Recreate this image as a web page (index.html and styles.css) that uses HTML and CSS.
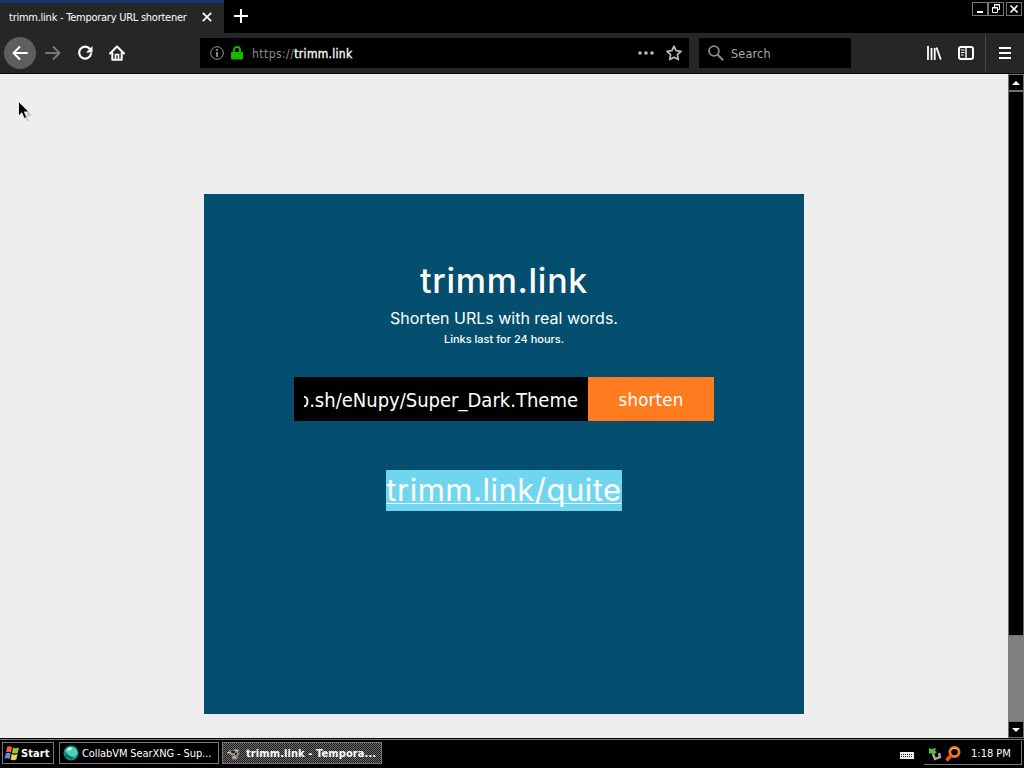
FILE: index.html
```html
<!DOCTYPE html>
<html lang="en">
<head>
    <meta charset="UTF-8">
    <meta name="viewport" content="width=device-width, initial-scale=1.0">
    <title>trimm.link - Temporary URL shortener</title>
    <link rel="stylesheet" href="styles.css">
</head>
<body>
    <div class="tabbar">
        <div class="tab">
            <span class="tab-title">trimm.link - Temporary URL shortener</span>
            <svg class="tab-close" width="10" height="10" viewBox="0 0 10 10"><path d="M.8.8l8.4 8.4M9.2.8L.8 9.2" stroke="#fff" stroke-width="1.7"/></svg>
        </div>
        <svg class="new-tab" width="14" height="14" viewBox="0 0 14 14"><path d="M7 0v14M0 7h14" stroke="#fff" stroke-width="2"/></svg>
        <div class="window-buttons">
            <span class="win-btn"><svg width="14" height="12" viewBox="0 0 14 12"><path d="M4 9h6" stroke="#fff" stroke-width="2"/></svg></span>
            <span class="win-btn"><svg width="14" height="12" viewBox="0 0 14 12"><path d="M5.500 4V1.500h5v5H9M5 2h6M3.500 4.500h5v5h-5zM3 5h6" fill="none" stroke="#fff"/></svg></span>
            <span class="win-btn close"><svg width="14" height="12" viewBox="0 0 14 12"><path d="M3.500 2.500l7 7M10.500 2.500l-7 7" stroke="#fff" stroke-width="1.700"/></svg></span>
        </div>
    </div>

    <div class="toolbar">
        <div class="nav">
            <span class="back"><svg width="16" height="16" viewBox="0 0 16 16"><path d="M15 8H1.500M7.500 2l-6 6 6 6" fill="none" stroke="#fff" stroke-width="2" stroke-linecap="round" stroke-linejoin="round"/></svg></span>
            <svg width="16" height="16" viewBox="0 0 16 16"><path d="M1 8h13.500M8.500 2l6 6-6 6" fill="none" stroke="#777" stroke-width="2" stroke-linecap="round" stroke-linejoin="round"/></svg>
            <svg width="16" height="16" viewBox="0 0 16 16"><path d="M12.800 3.800A6 6 0 1 0 14 9" fill="none" stroke="#fff" stroke-width="2.200" stroke-linecap="round"/><path d="M15.500 1v6.500H9z" fill="#fff"/></svg>
            <svg width="16" height="16" viewBox="0 0 16 16"><path d="M1 8.500l7-7 7 7M3.300 8v6.800h9.400V8" fill="none" stroke="#fff" stroke-width="2" stroke-linecap="round" stroke-linejoin="round"/><path d="M6.500 14.500V9.500h3v5" fill="none" stroke="#fff" stroke-width="1.600"/></svg>
        </div>
        <div class="urlbar">
            <svg width="14" height="14" viewBox="0 0 14 14"><circle cx="7" cy="7" r="6.300" fill="none" stroke="#999"/><path d="M7 6v5M7 3v1.800" stroke="#aaa" stroke-width="1.600"/></svg>
            <svg class="lock" width="12" height="14" viewBox="0 0 12 14"><path d="M3 7V4a3 3 0 0 1 6 0v3" fill="none" stroke="#12bc00" stroke-width="1.900"/><rect y="6" width="12" height="7.500" rx="1" fill="#12bc00"/></svg>
            <span class="address"><span class="scheme">https://</span><span class="domain">trimm.link</span></span>
            <svg class="dots" width="16" height="4" viewBox="0 0 16 4"><g fill="#bbb"><circle cx="2" cy="2" r="1.800"/><circle cx="8" cy="2" r="1.800"/><circle cx="14" cy="2" r="1.800"/></g></svg>
            <svg width="16" height="16" viewBox="0 0 16 16"><path d="M8 1.200l2.100 4.500 4.900.6-3.600 3.400.9 4.900L8 12.200l-4.300 2.400.9-4.900L1 6.300l4.900-.6z" fill="none" stroke="#bbb" stroke-width="1.700" stroke-linejoin="round"/></svg>
        </div>
        <div class="searchbar">
            <svg width="16" height="16" viewBox="0 0 16 16"><circle cx="6" cy="6" r="4.900" fill="none" stroke="#8c8c8c" stroke-width="1.800"/><path d="M9.700 9.700l5.500 5.500" stroke="#8c8c8c" stroke-width="2"/></svg>
            <span>Search</span>
        </div>
        <div class="tools">
            <svg width="16" height="16" viewBox="0 0 16 16"><path d="M2 1v14M5.500 3v12M8.700 3v12M10.500 2.500l4.300 12" stroke="#fff" stroke-width="1.800"/></svg>
            <svg width="16" height="14" viewBox="0 0 16 14"><rect x="1" y="1" width="14" height="12" rx="2" fill="none" stroke="#fff" stroke-width="2"/><path d="M8 1v12" stroke="#fff" stroke-width="1.400"/><path d="M3 4h3.500M3 6.500h3.500M3 9h2.500" stroke="#fff"/></svg>
        </div>
        <div class="menu">
            <svg width="12" height="12" viewBox="0 0 12 12"><path d="M0 1h12M0 6h12M0 11h12" stroke="#fff" stroke-width="2"/></svg>
        </div>
    </div>

    <div class="viewport">
        <div class="page">
            <div class="card">
                <h1>trimm.link</h1>
                <p class="tagline">Shorten URLs with real words.</p>
                <p class="note">Links last for 24 hours.</p>
                <div class="form">
                    <div class="field"><div class="field-clip"><span>p.sh/eNupy/Super_Dark.Theme</span></div></div>
                    <button class="shorten">shorten</button>
                </div>
                <a class="result">trimm.link/quite</a>
            </div>
        </div>
        <div class="scrollbar">
            <div class="scroll-btn"><svg width="8" height="4" viewBox="0 0 8 4"><path d="M4 0l4 4H0z" fill="#fff"/></svg></div>
            <div class="thumb"></div>
            <div class="track"></div>
            <div class="scroll-btn"><svg width="8" height="4" viewBox="0 0 8 4"><path d="M0 0h8L4 4z" fill="#fff"/></svg></div>
        </div>
        <svg class="cursor" width="14" height="21" viewBox="0 0 14 21"><path d="M3 4l9 10-4 1 2 5" fill="none" stroke="#aaa" stroke-width="2" opacity=".6"/><path d="M.5.500v14.500l3.300-3.200 2.400 5.700 2.600-1.100-2.400-5.500h4.700z" fill="#000" stroke="#fff" stroke-width=".8"/></svg>
    </div>

    <div class="taskbar">
        <div class="task start">
            <svg width="16" height="16" viewBox="0 0 16 16"><path d="M3 2q2.500-1.500 5 0L7 7.500q-2.500-1.300-5 0z" fill="#f0643c"/><path d="M9 2.500q2.500 1.300 6 0L13.800 8q-3 1.200-5.800 0z" fill="#8cc63f"/><path d="M1.800 8.500q2.500-1.300 5 0L5.600 14q-2.500-1.400-5 0z" fill="#5a8cf0"/><path d="M7.800 9q3 1.300 5.800 0l-1.300 5.500q-2.800 1.400-5.700 0z" fill="#fbd13c"/></svg>
            <span>Start</span>
        </div>
        <div class="task collab">
            <svg width="16" height="16" viewBox="0 0 16 16"><circle cx="8" cy="8" r="7.500" fill="#148c85"/><path d="M2 6q2-4 6-4l4 1 3 5-3 4-5-1-3-3z" fill="#4fd0bb"/><path d="M4 4l4-2 1 2-4 2z" fill="#d6fff4"/><path d="M2 11l4 1 3 2" stroke="#0b5f5b" stroke-width="1.500" fill="none"/></svg>
            <span>CollabVM SearXNG - Sup...</span>
        </div>
        <div class="task active">
            <svg width="16" height="16" viewBox="0 0 16 16"><path d="M1 8l3-3 2 1 3-2 5 1-2 2 2 2-2 1v3l-3 2-3-1v-3L4 9z" fill="#8c8274"/><path d="M1 8l3-1 2 2M9 5l3 1M8 9h4M7 13l3-1" stroke="#ddd6c8" fill="none"/><path d="M5 7h4M10 8v2" stroke="#29241d" stroke-width="2"/></svg>
            <span>trimm.link - Tempora...</span>
        </div>
        <svg class="keyboard" width="14" height="7" viewBox="0 0 14 7"><rect width="14" height="7" fill="#eee"/><path d="M1 2.500h12M1 4.500h12" stroke="#222" stroke-dasharray="1 1"/></svg>
        <div class="tray">
            <svg width="14" height="14" viewBox="0 0 14 14"><path d="M5 7l2 5 5-2-1-4" fill="none" stroke="#aaa" stroke-width="2.400"/><path d="M1 1l3 1 4-1-1 3 2 1-4 3-2-2-2 1z" fill="#58bb3e"/></svg>
            <svg width="16" height="16" viewBox="0 0 16 16"><circle cx="9.500" cy="6" r="4.600" fill="none" stroke="#f47b20" stroke-width="2.800"/><path d="M6 9.500l-4.500 5" stroke="#e8571c" stroke-width="3.400"/><path d="M6 4q2-3 6-1" fill="none" stroke="#ffc05c"/></svg>
            <span class="clock">1:18 PM</span>
        </div>
    </div>
</body>
</html>
```
FILE: styles.css
```css
body {
    margin: 0;
    width: 1024px;
    height: 768px;
    display: flex;
    flex-direction: column;
    overflow: hidden;
    background: #000;
    color: #fff;
    font-family: "DejaVu Sans Condensed", "DejaVu Sans", sans-serif;
    font-size: 11px;
}

svg {
    display: block;
    flex: none;
}

span {
    white-space: nowrap;
}

/* Browser chrome */
.tabbar {
    height: 33px;
    flex: none;
    display: flex;
    background: #000;
}

.tab {
    box-sizing: border-box;
    width: 224px;
    border-top: 3px solid #17356f;
    background: #262626;
    display: flex;
    align-items: center;
    padding: 0 12px 2px 9px;
    justify-content: space-between;
}

.tab-title {
    font-size: 11px;
    letter-spacing: -0.25px;
}

.new-tab {
    margin: 9px 0 0 10px;
}

.window-buttons {
    display: flex;
    margin: 2px 2px 0 auto;
    height: 14px;
}

.win-btn {
    box-sizing: border-box;
    width: 16px;
    height: 14px;
    border: 1px solid #777;
}

.win-btn.close {
    margin-left: 2px;
}

.toolbar {
    box-sizing: border-box;
    height: 41px;
    flex: none;
    display: flex;
    align-items: center;
    background: #262626;
    border-bottom: 1px solid #0b0b0b;
}

.nav {
    width: 200px;
    display: flex;
    align-items: center;
    gap: 16px;
    padding-left: 4px;
    box-sizing: border-box;
}

.back {
    width: 32px;
    height: 32px;
    margin-right: -7px;
    border-radius: 50%;
    background: #5e5e5e;
    display: flex;
    align-items: center;
    justify-content: center;
}

.urlbar, .searchbar {
    box-sizing: border-box;
    height: 30px;
    background: #000;
    display: flex;
    align-items: center;
    font-size: 13px;
}

.urlbar {
    width: 489px;
    padding: 0 7px 0 10px;
}

.lock {
    margin: 0 9px 0 7px;
}

.address {
    flex: 1;
    font-size: 12px;
    letter-spacing: 0.45px;
    padding-top: 1px;
}

.scheme {
    color: #8a8a8a;
}

.domain {
    letter-spacing: 0.3px;
    -webkit-text-stroke: 0.3px #fff;
}

.dots {
    margin-right: 12px;
}

.searchbar {
    width: 152px;
    margin-left: 10px;
    padding-left: 9px;
    gap: 7px;
    color: #aaa;
    font-size: 12.5px;
    letter-spacing: 0.2px;
}

.tools {
    display: flex;
    align-items: center;
    gap: 16px;
    margin: 0 11px 0 auto;
}

.menu {
    height: 36px;
    width: 39px;
    border-left: 1px solid #4a4a4a;
    box-sizing: border-box;
    padding-left: 13px;
    display: flex;
    align-items: center;
}

/* Page */
.viewport {
    position: relative;
    height: 664px;
    flex: none;
    display: flex;
}

.page {
    flex: 1;
    background: #eee;
    padding-top: 120px;
    box-sizing: border-box;
}

.card {
    box-sizing: border-box;
    width: 600px;
    height: 520px;
    margin: 0 auto;
    padding-top: 62px;
    background: #044f6f;
    display: flex;
    flex-direction: column;
    align-items: center;
    font-family: Inter, "Open Sans", sans-serif;
}

h1 {
    margin: 0;
    font-size: 34px;
    line-height: 50px;
    font-weight: 500;
    letter-spacing: 0.7px;
}

.tagline {
    margin: 0;
    font-size: 16px;
    line-height: 24px;
}

.note {
    margin: 0;
    font-size: 11px;
    line-height: 18px;
    font-weight: 500;
}

.form {
    display: flex;
    width: 420px;
    height: 44px;
    margin-top: 29px;
}

.field {
    box-sizing: border-box;
    width: 294px;
    padding: 0 10px;
    background: #000;
    font-family: "DejaVu Sans Condensed", "DejaVu Sans", sans-serif;
}

/* long URLs stay scrolled to their end */
.field-clip {
    display: flex;
    justify-content: flex-end;
    overflow: hidden;
    font-size: 20px;
    line-height: 46px;
}

.shorten {
    width: 126px;
    border: 0;
    padding: 0;
    background: #ff7b20;
    color: #fff;
    font-family: "DejaVu Sans Condensed", "DejaVu Sans", sans-serif;
    font-size: 18.5px;
    letter-spacing: 0.2px;
}

.result {
    margin-top: 49px;
    background: #70d6ef;
    font-size: 31px;
    line-height: 40px;
    padding-bottom: 1px;
    letter-spacing: 0.5px;
    text-decoration: underline;
    text-decoration-thickness: 1px;
    text-underline-offset: 2px;
}

.scrollbar {
    width: 16px;
    display: flex;
    flex-direction: column;
    background: #000;
}

.scroll-btn, .thumb {
    box-sizing: border-box;
    border: 1px solid #707070;
}

.scroll-btn {
    height: 17px;
    display: flex;
    align-items: center;
    justify-content: center;
}

.thumb {
    height: 545px;
}

.track {
    flex: 1;
    background: #808080;
}

.cursor {
    position: absolute;
    left: 18px;
    top: 27px;
}

/* Taskbar */
.taskbar {
    box-sizing: border-box;
    height: 30px;
    flex: none;
    display: flex;
    align-items: center;
    padding: 0 2px 1px;
    border-top: 1px solid #000;
    box-shadow: inset 0 1px #777;
}

.task {
    box-sizing: border-box;
    height: 22px;
    border: 1px solid #777;
    display: flex;
    align-items: center;
    padding-left: 3px;
    gap: 3px;
}

.start {
    width: 52px;
    padding-left: 1px;
    gap: 1px;
    font-weight: bold;
}

.start span {
    letter-spacing: 0.1px;
}

.collab {
    width: 160px;
    margin-left: 5px;
    letter-spacing: -0.1px;
}

.active {
    width: 160px;
    margin-left: 3px;
    gap: 4px;
    font-weight: bold;
    letter-spacing: 0.1px;
    background: repeating-conic-gradient(#6a6a6a 0 25%, #1b1b1b 0 50%) 0 0 / 2px 2px;
}

.keyboard {
    margin: 4px 10px 0 auto;
}

.tray {
    box-sizing: border-box;
    width: 98px;
    height: 24px;
    padding: 2px 0 0 4px;
    border-right: 1px solid #777;
    border-bottom: 1px solid #777;
    display: flex;
    align-items: center;
    gap: 3px;
}

.clock {
    margin-left: 7px;
}
```
